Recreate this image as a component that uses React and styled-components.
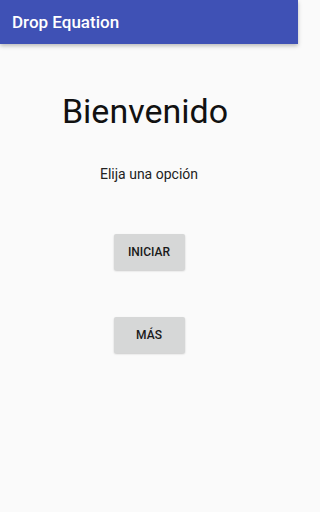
import React from "react";
import styled, { createGlobalStyle } from "styled-components";

const Global = createGlobalStyle`
  html, body {
    margin: 0;
    padding: 0;
    background: #fafafa;
    font-family: Roboto, "Noto Sans", sans-serif;
  }
`;

const Screen = styled.div`
  width: 298px;
  min-height: 512px;
  background: #fafafa;
  display: flex;
  flex-direction: column;
`;

const AppBar = styled.header`
  height: 44px;
  background: #3f51b5;
  display: flex;
  align-items: center;
  padding-left: 12px;
  box-shadow: 0 2px 4px rgba(0, 0, 0, 0.25);
`;

const Title = styled.h1`
  margin: 0;
  color: #fff;
  font-size: 17px;
  font-weight: 500;
`;

const Content = styled.main`
  display: flex;
  flex-direction: column;
  align-items: center;
`;

const Heading = styled.h2`
  margin: 47px 0 0;
  font-size: 34px;
  font-weight: 400;
  color: #111;
  line-height: 40px;
  transform: translateX(-4px);
`;

const Subtitle = styled.p`
  margin: 33px 0 0;
  font-size: 14px;
  color: #222;
  line-height: 20px;
`;

const Button = styled.button`
  margin-top: ${({ gap }) => gap}px;
  width: 71px;
  height: 36px;
  border: none;
  border-radius: 2px;
  background: #d6d7d7;
  box-shadow: 0 1px 2px rgba(0, 0, 0, 0.2);
  font-family: Roboto, "Noto Sans", sans-serif;
  font-size: 12px;
  font-weight: 500;
  color: #1a1a1a;
`;

export default function App() {
  return (
    <Screen>
      <Global />
      <AppBar>
        <Title>Drop Equation</Title>
      </AppBar>
      <Content>
        <Heading>Bienvenido</Heading>
        <Subtitle>Elija una opción</Subtitle>
        <Button gap={50}>INICIAR</Button>
        <Button gap={47}>MÁS</Button>
      </Content>
    </Screen>
  );
}
